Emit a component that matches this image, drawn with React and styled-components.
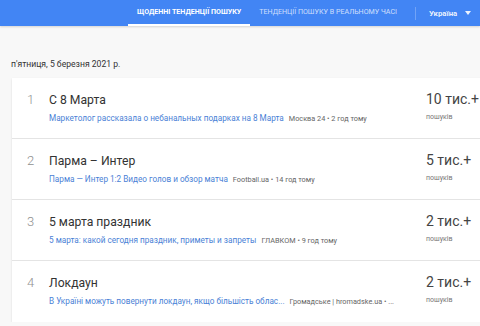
import React from 'react';
import styled, { createGlobalStyle } from 'styled-components';

const GlobalStyle = createGlobalStyle`
	html, body {
		margin: 0;
		padding: 0;
		background: #f8f8f8;
		font-family: Roboto, "Liberation Sans", Arial, sans-serif;
		overflow: hidden;
	}
`;

const trends = [
	{
		rank: 1,
		title: 'С 8 Марта',
		link: 'Маркетолог рассказала о небанальных подарках на 8 Марта',
		source: 'Москва 24 • 2 год тому',
		count: '10 тис.+',
	},
	{
		rank: 2,
		title: 'Парма – Интер',
		link: 'Парма — Интер 1:2 Видео голов и обзор матча',
		source: 'Football.ua • 14 год тому',
		count: '5 тис.+',
	},
	{
		rank: 3,
		title: '5 марта праздник',
		link: '5 марта: какой сегодня праздник, приметы и запреты',
		source: 'ГЛАВКОМ • 9 год тому',
		count: '2 тис.+',
	},
	{
		rank: 4,
		title: 'Локдаун',
		link: 'В Україні можуть повернути локдаун, якщо більшість облас...',
		source: 'Громадське | hromadske.ua • ...',
		count: '2 тис.+',
	},
];

export default function App() {
	return (
		<>
			<GlobalStyle />
			<Header>
				<Tab active>Щоденні тенденції пошуку</Tab>
				<Tab>Тенденції пошуку в реальному часі</Tab>
				<Divider />
				<Country>
					Україна
					<Caret />
				</Country>
			</Header>
			<Main>
				<DateLine>п'ятниця, 5 березня 2021 р.</DateLine>
				<Card>
					{trends.map((t) => (
						<Row key={t.rank}>
							<Rank>{t.rank}</Rank>
							<Details>
								<Title>{t.title}</Title>
								<Meta>
									<Link>{t.link}</Link>
									<Source>{t.source}</Source>
								</Meta>
							</Details>
							<Stats>
								<Count>{t.count}</Count>
								<Label>пошуків</Label>
							</Stats>
						</Row>
					))}
				</Card>
			</Main>
		</>
	);
}

const Header = styled.header`
	height: 26px;
	background: #4285f4;
	display: flex;
	align-items: stretch;
	padding-left: 128px;
	box-shadow: 0 1px 2px rgba(0, 0, 0, 0.15);
`;

const Tab = styled.div`
	display: flex;
	align-items: center;
	padding: 0 9px 1px;
	font-size: 7.1px;
	font-weight: ${(p) => (p.active ? 700 : 400)};
	text-transform: uppercase;
	color: ${(p) => (p.active ? '#fff' : 'rgba(255,255,255,0.75)')};
	border-bottom: 2px solid ${(p) => (p.active ? '#fff' : 'transparent')};
	white-space: nowrap;
`;

const Divider = styled.div`
	width: 1px;
	margin: 7px 13px 6px 9px;
	background: rgba(255, 255, 255, 0.25);
`;

const Country = styled.div`
	display: flex;
	align-items: center;
	gap: 8px;
	font-size: 7.8px;
	font-weight: 700;
	color: rgba(255, 255, 255, 0.9);
`;

const Caret = styled.span`
	width: 0;
	height: 0;
	border-left: 3.5px solid transparent;
	border-right: 3.5px solid transparent;
	border-top: 4px solid rgba(255, 255, 255, 0.9);
`;

const Main = styled.main`
	padding: 31px 0 0 12px;
`;

const DateLine = styled.div`
	font-size: 8.6px;
	color: #333;
	margin-left: -1px;
	height: 14px;
	line-height: 14px;
	margin-bottom: 7px;
`;

const Card = styled.section`
	width: 480px;
	background: #fff;
	box-shadow: 0 1px 2px rgba(0, 0, 0, 0.12);
`;

const Row = styled.div`
	height: 61px;
	display: flex;
	align-items: flex-start;
	border-bottom: 1px solid #e4e4e4;
	box-sizing: border-box;
	&:last-child {
		border-bottom: none;
	}
`;

const Rank = styled.div`
	width: 37px;
	padding-left: 15px;
	box-sizing: border-box;
	padding-top: 14px;
	font-size: 13px;
	font-weight: 300;
	color: #8f8f8f;
`;

const Details = styled.div`
	width: 377px;
	padding-top: 14px;
`;

const Title = styled.div`
	font-size: 12.2px;
	color: #333;
	line-height: 16px;
`;

const Meta = styled.div`
	margin-top: 5px;
	display: flex;
	align-items: baseline;
	gap: 5px;
	white-space: nowrap;
`;

const Link = styled.span`
	font-size: 8.2px;
	color: #4a7fd6;
`;

const Source = styled.span`
	font-size: 7.3px;
	color: #666;
`;

const Stats = styled.div`
	padding-top: 12px;
`;

const Count = styled.div`
	font-size: 14px;
	color: #444;
	line-height: 18px;
`;

const Label = styled.div`
	margin-top: 5px;
	font-size: 7px;
	color: #777;
`;
